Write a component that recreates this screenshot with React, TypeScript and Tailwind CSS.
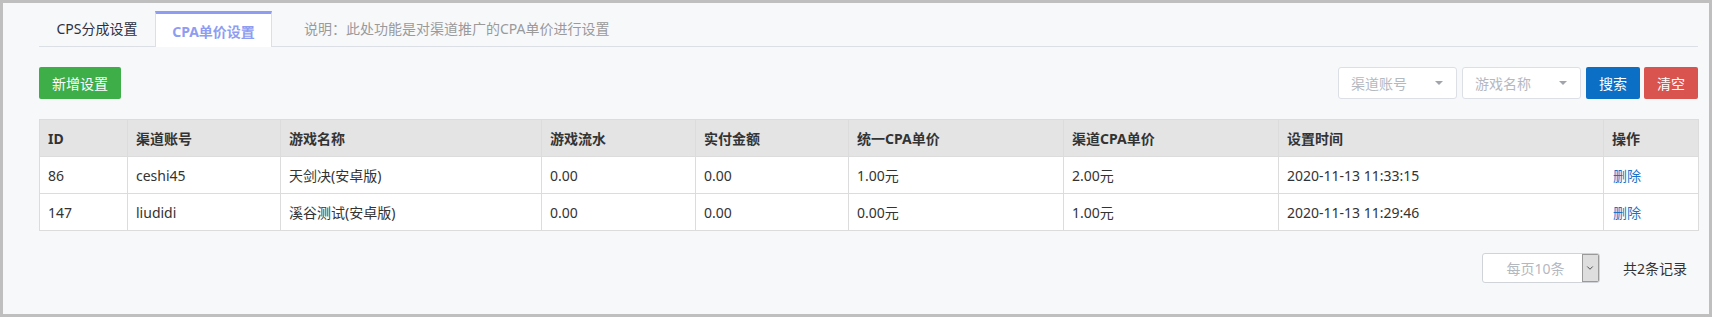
import { ChevronDown } from 'lucide-react';

const columns = [
  { name: 'ID', width: 'w-[88px]' },
  { name: '渠道账号', width: 'w-[153px]' },
  { name: '游戏名称', width: 'w-[261px]' },
  { name: '游戏流水', width: 'w-[154px]' },
  { name: '实付金额', width: 'w-[153px]' },
  { name: '统一CPA单价', width: 'w-[215px]' },
  { name: '渠道CPA单价', width: 'w-[215px]' },
  { name: '设置时间', width: 'w-[325px]' },
  { name: '操作', width: 'w-[95px]' },
];

const rows = [
  ['86', 'ceshi45', '天剑决(安卓版)', '0.00', '0.00', '1.00元', '2.00元', '2020-11-13 11:33:15'],
  ['147', 'liudidi', '溪谷测试(安卓版)', '0.00', '0.00', '0.00元', '1.00元', '2020-11-13 11:29:46'],
];

function FilterSelect({ label }: { label: string }) {
  return (
    <div className="flex h-[32px] w-[119px] items-center justify-between rounded-[3px] border border-[#dcdfe6] bg-white pl-[12px] pr-[13px] text-[14px] text-[#b4b8bf]">
      <span>{label}</span>
      <span className="h-0 w-0 border-x-[4px] border-t-[4px] border-x-transparent border-t-[#a0a4ab]" />
    </div>
  );
}

export default function App() {
  return (
    <div
      className="h-[317px] w-[1712px] border-[3px] border-[#bfbfbf] bg-[#f7f8fa] pl-[36px] pr-[11px] pt-[8px] text-[#333]"
      style={{ fontFamily: '"Noto Sans", "Noto Sans CJK SC", sans-serif' }}
    >
      <div className="flex h-[36px] items-end border-b border-[#dcdfe6] text-[14px]">
        <div className="flex h-[35px] w-[116px] items-center justify-center text-[#2d3042]">CPS分成设置</div>
        <div className="-mb-px flex h-[36px] w-[117px] items-center justify-center border-x border-t-[3px] border-x-[#dcdfe6] border-t-[#8e9cf2] bg-white pt-[2px] font-bold text-[#8e9cf2]">
          CPA单价设置
        </div>
        <div className="flex h-[35px] items-center pl-[32px] text-[#9a9a9a]">说明：此处功能是对渠道推广的CPA单价进行设置</div>
      </div>

      <div className="mt-[20px] flex items-center justify-between">
        <button className="h-[32px] w-[82px] rounded-[2px] bg-[#3dae48] text-[14px] text-white">新增设置</button>
        <div className="flex items-center">
          <FilterSelect label="渠道账号" />
          <div className="ml-[5px]">
            <FilterSelect label="游戏名称" />
          </div>
          <button className="ml-[5px] h-[32px] w-[54px] rounded-[2px] bg-[#0b6fc6] text-[14px] text-white">搜索</button>
          <button className="ml-[4px] h-[32px] w-[54px] rounded-[2px] bg-[#d9534f] text-[14px] text-white">清空</button>
        </div>
      </div>

      <table className="mt-[20px] w-[1659px] table-fixed border-collapse text-[14px]">
        <thead>
          <tr className="h-[37px] bg-[#e4e4e4]">
            {columns.map((c) => (
              <th key={c.name} className={`${c.width} border border-[#dcdcdc] px-[8px] text-left font-bold`}>
                {c.name}
              </th>
            ))}
          </tr>
        </thead>
        <tbody>
          {rows.map((r) => (
            <tr key={r[0]} className="h-[37px] bg-white">
              {r.map((cell, i) => (
                <td key={i} className="border border-[#dcdcdc] px-[8px]">
                  {cell}
                </td>
              ))}
              <td className="border border-[#dcdcdc] px-[9px] text-[#1a73c8]">删除</td>
            </tr>
          ))}
        </tbody>
      </table>

      <div className="mt-[22px] flex items-center justify-end pr-[11px]">
        <div className="flex h-[30px] w-[118px] overflow-hidden rounded-[3px] border border-[#d0d3d8] bg-white">
          <div className="flex flex-1 items-center justify-center pl-[6px] text-[14px] text-[#b4b8bf]">每页10条</div>
          <div className="flex w-[17px] items-center justify-center border border-[#9a9a9a] bg-[#dedede]">
            <ChevronDown className="h-[10px] w-[10px] text-[#333]" strokeWidth={2} />
          </div>
        </div>
        <span className="ml-[23px] text-[14px] text-[#333]">共2条记录</span>
      </div>
    </div>
  );
}
